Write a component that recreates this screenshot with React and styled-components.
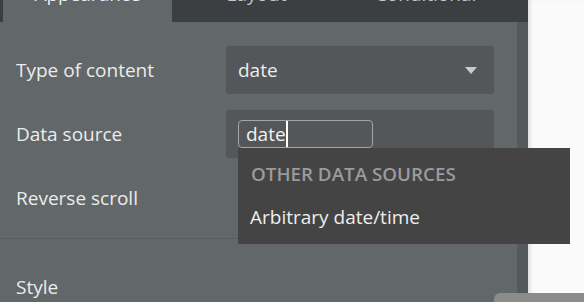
import React from "react";
import styled, { createGlobalStyle } from "styled-components";

const GlobalStyle = createGlobalStyle`
  html, body {
    margin: 0;
    padding: 0;
    width: 584px;
    height: 302px;
    overflow: hidden;
    background: #fafafa;
    font-family: "Open Sans", "Noto Sans", sans-serif;
  }
`;

const Page = styled.div`
  display: flex;
  width: 584px;
  height: 302px;
  overflow: hidden;
`;

const Panel = styled.div`
  width: 528px;
  flex-shrink: 0;
  display: flex;
  flex-direction: column;
  background: #62676a;
`;

const TabBar = styled.div`
  height: 22px;
  display: flex;
  padding-left: 3px;
  background: #3b3f42;
  overflow: hidden;
`;

const Tab = styled.div`
  width: 169px;
  display: flex;
  justify-content: center;
  background: ${(p) => (p.$active ? "#62676a" : "transparent")};
  color: ${(p) => (p.$active ? "#eeeeee" : "#c4c6c8")};
  font-size: 19px;
  line-height: 24px;
  span {
    margin-top: -18px;
  }
`;

const Body = styled.div`
  flex: 1;
  display: flex;
  min-height: 0;
`;

const Content = styled.div`
  flex: 1;
  padding: 24px 23px 0 16px;
`;

const Scrollbar = styled.div`
  width: 11px;
  background: #54595c;
`;

const Row = styled.div`
  display: flex;
  align-items: center;
  height: 48px;
  margin-bottom: 16px;
`;

const Label = styled.div`
  width: 210px;
  flex-shrink: 0;
  color: #ececec;
  font-size: 19px;
`;

const Field = styled.div`
  position: relative;
  flex: 1;
  height: 48px;
  box-sizing: border-box;
  display: flex;
  align-items: center;
  justify-content: space-between;
  padding: 0 17px 0 12px;
  border-radius: 3px;
  background: #535759;
  color: #ececec;
  font-size: 19px;
`;

const Arrow = styled.div`
  width: 0;
  height: 0;
  border-left: 6px solid transparent;
  border-right: 6px solid transparent;
  border-top: 7px solid #c9cbcc;
`;

const TextBox = styled.div`
  width: 135px;
  height: 28px;
  box-sizing: border-box;
  display: flex;
  align-items: center;
  padding-left: 7px;
  border: 1px solid #a3a5a7;
  border-radius: 4px;
  color: #f2f2f2;
  font-size: 19px;
`;

const Caret = styled.span`
  width: 2px;
  height: 26px;
  margin-left: 0;
  background: #ffffff;
`;

const Popup = styled.div`
  position: absolute;
  left: 12px;
  top: 38px;
  width: 332px;
  height: 96px;
  box-sizing: border-box;
  background: #444444;
  z-index: 2;
`;

const PopupHeader = styled.div`
  padding: 14px 12px 0 13px;
  line-height: 24px;
  font-size: 18.8px;
  font-weight: 600;
  color: #9b9b9b;
  text-transform: uppercase;
`;

const PopupItem = styled.div`
  padding: 19px 12px 0;
  line-height: 24px;
  font-size: 19px;
  color: #eeeeee;
`;

const Divider = styled.hr`
  margin: 0 -23px 0 -16px;
  border: none;
  border-top: 1px solid #585c5f;
`;

const Section = styled.div`
  display: flex;
  align-items: center;
  height: 48px;
  margin-top: 24px;
`;

const Side = styled.div`
  flex: 1;
  background: #fafafa;
  box-shadow: inset 4px 0 4px -2px rgba(0, 0, 0, 0.12);
`;

const Corner = styled.div`
  position: fixed;
  left: 494px;
  top: 293px;
  width: 90px;
  height: 9px;
  border-top-left-radius: 6px;
  background: #8b8b8b;
  z-index: 3;
`;

export default function App() {
  return (
    <>
      <GlobalStyle />
      <Page>
        <Panel>
          <TabBar>
            <Tab $active><span>Appearance</span></Tab>
            <Tab><span>Layout</span></Tab>
            <Tab><span>Conditional</span></Tab>
          </TabBar>
          <Body>
            <Content>
              <Row>
                <Label>Type of content</Label>
                <Field>
                  date
                  <Arrow />
                </Field>
              </Row>
              <Row>
                <Label>Data source</Label>
                <Field>
                  <TextBox>
                    date
                    <Caret />
                  </TextBox>
                  <Popup>
                    <PopupHeader>Other data sources</PopupHeader>
                    <PopupItem>Arbitrary date/time</PopupItem>
                  </Popup>
                </Field>
              </Row>
              <Row>
                <Label>Reverse scroll</Label>
              </Row>
              <Divider />
              <Section>
                <Label>Style</Label>
              </Section>
            </Content>
            <Scrollbar />
          </Body>
        </Panel>
        <Side />
      </Page>
      <Corner />
    </>
  );
}
